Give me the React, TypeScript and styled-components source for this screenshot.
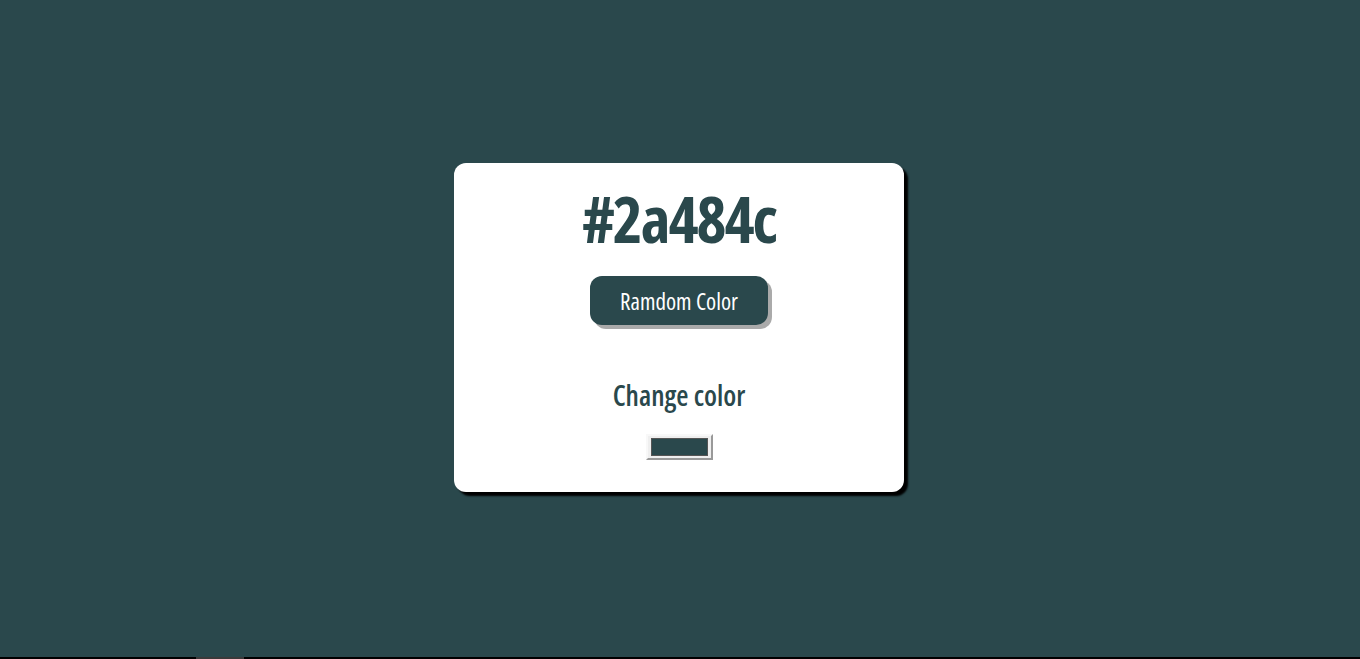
import { useState } from "react";
import styled, { createGlobalStyle } from "styled-components";

const GlobalStyle = createGlobalStyle`
  * {
    box-sizing: border-box;
  }
  body {
    margin: 0;
    background-color: #000;
    font-family: "Open Sans", Roboto, sans-serif;
    font-stretch: 75%;
    overflow: hidden;
  }
`;

const Page = styled.div<{ bg: string }>`
  height: 657px;
  background-color: ${(p) => p.bg};
  display: flex;
  justify-content: center;
  align-items: center;
  padding: 0 2px 2px 0;
`;
const Card = styled.div`
  width: 450px;
  height: 329px;
  background-color: #fff;
  border-radius: 12px;
  box-shadow: 4px 4px 2px #000;
  display: flex;
  flex-direction: column;
  align-items: center;
  padding-top: 24px;
`;
const Hex = styled.h1<{ color: string }>`
  margin: 0;
  font-size: 64px;
  line-height: 64px;
  font-weight: 700;
  letter-spacing: -2px;
  color: ${(p) => p.color};
`;
const Button = styled.button<{ bg: string }>`
  margin-top: 25px;
  width: 178px;
  height: 49px;
  border: none;
  border-radius: 12px;
  background-color: ${(p) => p.bg};
  box-shadow: 4px 4px 0 #aaa;
  color: #fff;
  font-family: inherit;
  font-stretch: 75%;
  font-size: 23px;
  font-weight: 500;
  cursor: pointer;
`;
const Label = styled.h2<{ color: string }>`
  margin: 53px 0 0;
  font-size: 28px;
  line-height: 34px;
  font-weight: 600;
  color: ${(p) => p.color};
`;
const ColorInput = styled.input`
  margin-top: 22px;
  width: 67px;
  height: 26px;
  padding: 2px 3px;
  background-color: #efefef;
  border: 2px solid;
  border-color: #f8f8f8 #999 #999 #f8f8f8;
  border-radius: 0;
  cursor: pointer;
  &::-webkit-color-swatch-wrapper {
    padding: 0;
  }
  &::-webkit-color-swatch {
    border: 1px solid #555;
    border-radius: 0;
  }
`;
const Strip = styled.div`
  height: 2px;
  background-color: #000;
  display: flex;
`;
const Thumb = styled.div`
  margin-left: 196px;
  width: 48px;
  background-color: #3a3a3a;
`;

function randomHex() {
  return "#" + Math.floor(Math.random() * 0xffffff).toString(16).padStart(6, "0");
}

function App() {
  const [color, setColor] = useState("#2a484c");

  return (
    <>
      <GlobalStyle />
      <Page bg={color}>
        <Card>
          <Hex color={color}>{color}</Hex>
          <Button bg={color} onClick={() => setColor(randomHex())}>
            Ramdom Color
          </Button>
          <Label color={color}>Change color</Label>
          <ColorInput
            type="color"
            value={color}
            onChange={(e) => setColor(e.target.value)}
          />
        </Card>
      </Page>
      <Strip>
        <Thumb />
      </Strip>
    </>
  );
}
export default App;
